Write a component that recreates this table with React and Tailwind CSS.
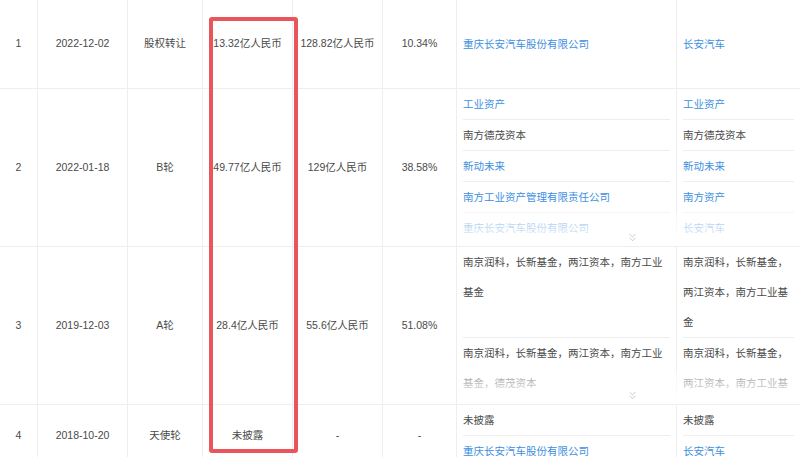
import React from "react";
import { ChevronsDown } from "lucide-react";

const rows = [
  {
    no: "1",
    date: "2022-12-02",
    round: "股权转让",
    amount: "13.32亿人民币",
    value: "128.82亿人民币",
    ratio: "10.34%",
    fill: true,
    investors: [["重庆长安汽车股份有限公司", "长安汽车", true]],
  },
  {
    no: "2",
    date: "2022-01-18",
    round: "B轮",
    amount: "49.77亿人民币",
    value: "129亿人民币",
    ratio: "38.58%",
    more: true,
    investors: [
      ["工业资产", "工业资产", true],
      ["南方德茂资本", "南方德茂资本", false],
      ["新动未来", "新动未来", true],
      ["南方工业资产管理有限责任公司", "南方资产", true],
      ["重庆长安汽车股份有限公司", "长安汽车", true],
      ["重庆两江新区产业发展集团", "两江产业集团", true],
    ],
  },
  {
    no: "3",
    date: "2019-12-03",
    round: "A轮",
    amount: "28.4亿人民币",
    value: "55.6亿人民币",
    ratio: "51.08%",
    more: true,
    investors: [
      [
        "南京润科，长新基金，两江资本，南方工业基金",
        "南京润科，长新基金，两江资本，南方工业基金",
        false,
      ],
      [
        "南京润科，长新基金，两江资本，南方工业基金，德茂资本",
        "南京润科，长新基金，两江资本，南方工业基金，德茂资本",
        false,
      ],
    ],
  },
  {
    no: "4",
    date: "2018-10-20",
    round: "天使轮",
    amount: "未披露",
    value: "-",
    ratio: "-",
    investors: [
      ["未披露", "未披露", false],
      ["重庆长安汽车股份有限公司", "长安汽车", true],
    ],
  },
];

function Cell({ children }) {
  return (
    <div className="flex items-center justify-center border-r border-[#eeeeee] text-center">
      {children}
    </div>
  );
}

function Investors({ items, fill, more }) {
  return (
    <div className="relative flex max-h-[157px] flex-col overflow-hidden">
      {items.map(([name, short, link], i) => {
        const last = i === items.length - 1;
        const inner =
          "flex flex-1 leading-[30px] " +
          (fill ? "items-center " : "items-start ") +
          (link ? "text-[#3d8fe0]" : "text-[#4a4a4a]") +
          (last ? "" : " border-b border-[#eeeeee]");
        return (
          <div key={i} className={fill ? "flex grow" : "flex shrink-0"}>
            <div className="flex w-[219px] shrink-0 px-[6px]">
              <div className={inner}>
                <span>{name}</span>
              </div>
            </div>
            <div className="flex flex-1 border-l border-[#eeeeee] px-[6px]">
              <div className={inner}>
                <span>{short}</span>
              </div>
            </div>
          </div>
        );
      })}
      {more && (
        <div className="absolute inset-x-0 bottom-0 flex h-[34px] items-end justify-center bg-linear-to-b from-white/40 to-white pb-[2px] pl-[7px]">
          <ChevronsDown size={13} strokeWidth={1.2} className="text-[#b0b0b0]" />
        </div>
      )}
    </div>
  );
}

export default function App() {
  return (
    <div className="relative h-[457px] w-[800px] overflow-hidden bg-white font-['Liberation_Sans','Noto_Sans_CJK_SC',sans-serif] text-[10.5px] text-[#4a4a4a]">
      {rows.map((r) => (
        <div
          key={r.no}
          className={
            "grid grid-cols-[38px_90px_75px_90px_90px_74px_1fr] border-b border-[#eeeeee]" +
            (r.fill ? " h-[89px]" : "")
          }
        >
          <Cell>{r.no}</Cell>
          <Cell>{r.date}</Cell>
          <Cell>{r.round}</Cell>
          <Cell>{r.amount}</Cell>
          <Cell>{r.value}</Cell>
          <Cell>{r.ratio}</Cell>
          <Investors items={r.investors} fill={r.fill} more={r.more} />
        </div>
      ))}
      <div className="pointer-events-none absolute left-[209px] top-[17px] h-[436px] w-[89px] rounded-[3px] border-4 border-[#e8555a]" />
    </div>
  );
}
